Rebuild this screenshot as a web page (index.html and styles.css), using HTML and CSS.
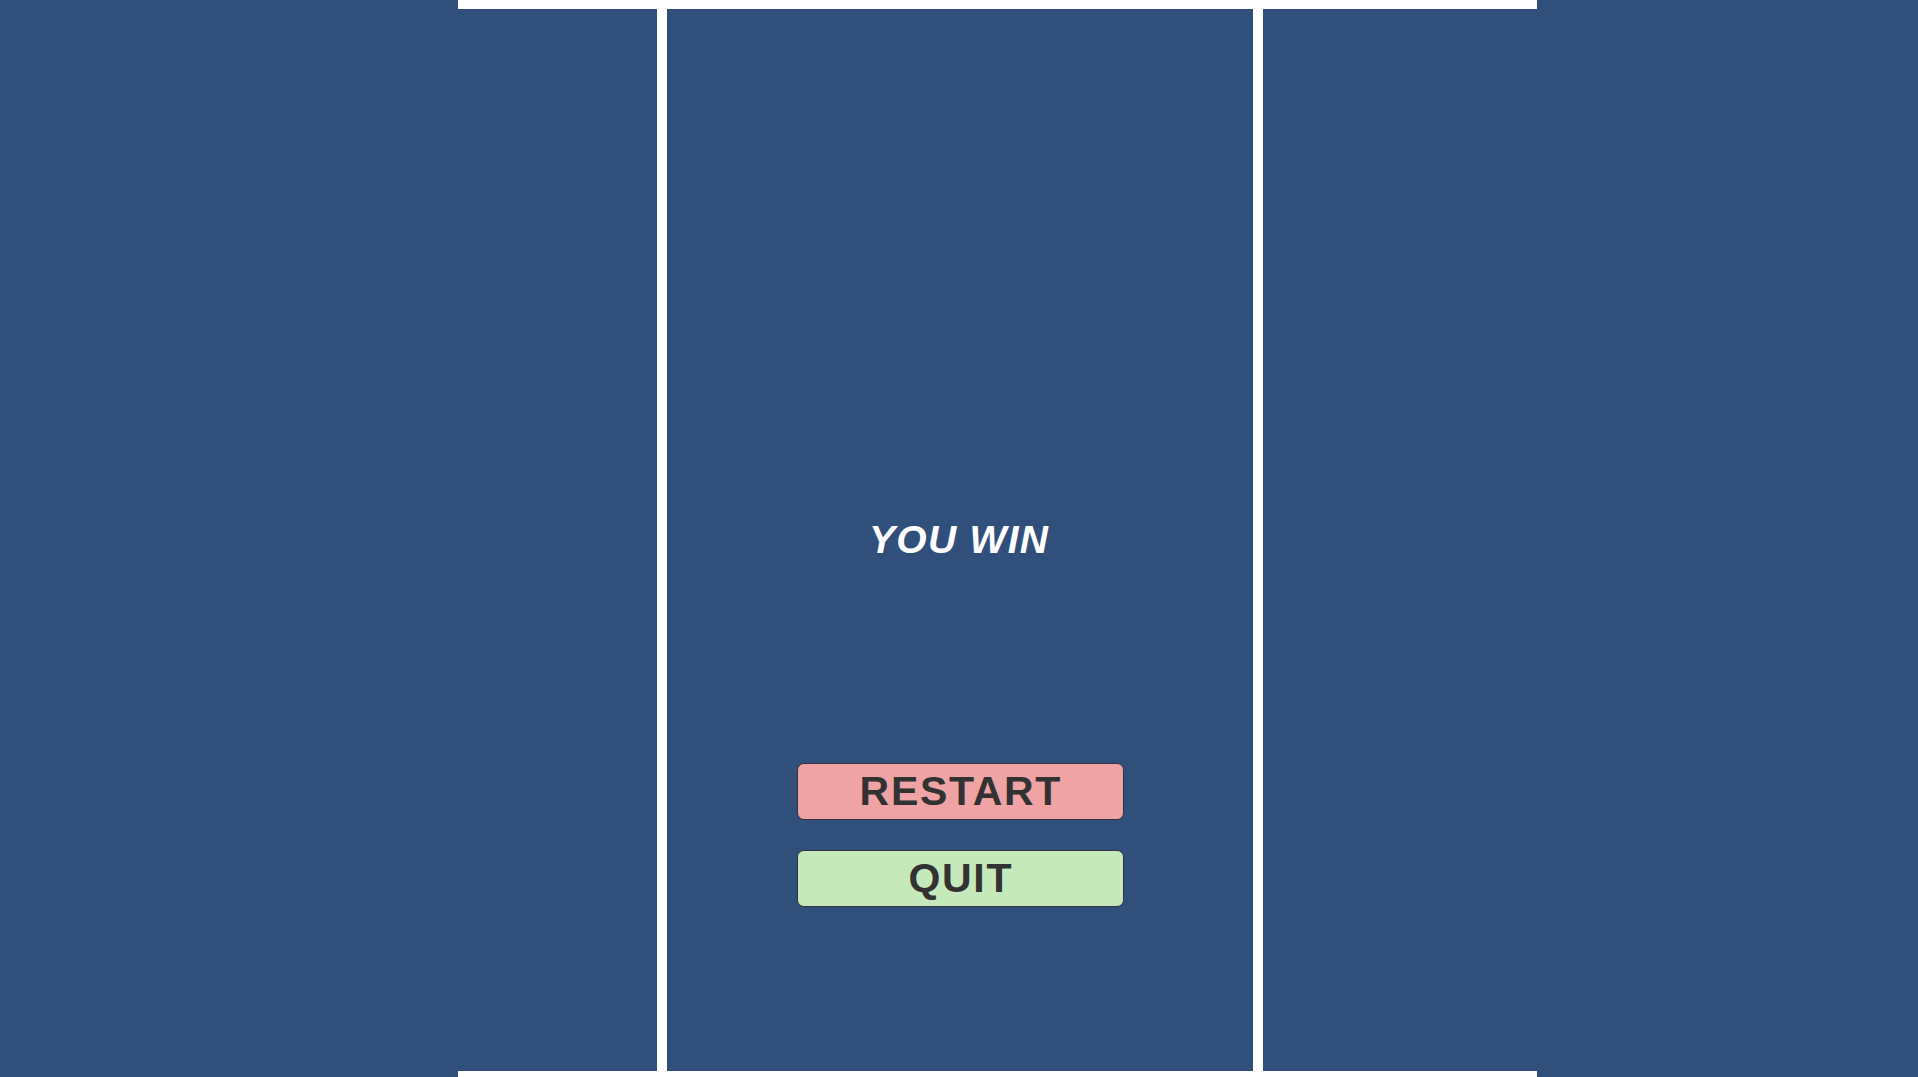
FILE: index.html
```html
<!DOCTYPE html>
<html>
<head>
<meta charset="utf-8">
<link rel="stylesheet" href="styles.css">
</head>
<body>
<div class="frame">
  <div class="side side-left"></div>
  <div class="divider"></div>
  <main class="stage">
    <div class="result">YOU WIN</div>
    <div class="actions">
      <button class="btn btn-restart">RESTART</button>
      <button class="btn btn-quit">QUIT</button>
    </div>
  </main>
  <div class="divider"></div>
  <div class="side side-right"></div>
</div>
</body>
</html>
```
FILE: styles.css
```css
html, body {
  margin: 0;
  padding: 0;
  height: 1077px;
  overflow: hidden;
  background: #314f7b;
  font-family: "Liberation Sans", Arial, sans-serif;
}
.frame {
  box-sizing: border-box;
  margin-left: 458px;
  width: 1079px;
  height: 1077px;
  border-top: 9px solid #ffffff;
  border-bottom: 6px solid #ffffff;
  display: grid;
  grid-template-columns: 199px 10px 586px 10px 274px;
}
.side {
  background: #314f7b;
}
.divider {
  background: #ffffff;
}
.stage {
  background: #314f7b;
  display: flex;
  flex-direction: column;
  align-items: center;
  padding-top: 508px;
}
.result {
  color: #ffffff;
  font-size: 39px;
  line-height: 46px;
  font-weight: bold;
  font-style: italic;
  height: 46px;
  letter-spacing: 1.3px;
  padding-left: 1.3px;
  margin-right: 3px;
}
.actions {
  margin-top: 200px;
  display: flex;
  flex-direction: column;
  gap: 30px;
}
.btn {
  box-sizing: border-box;
  width: 327px;
  height: 57px;
  border: 1.5px solid #35323f;
  border-radius: 7px;
  font-family: "Liberation Sans", Arial, sans-serif;
  font-weight: bold;
  font-size: 41px;
  letter-spacing: 1.7px;
  color: #323232;
  padding: 0 0 0 1.7px;
  display: flex;
  align-items: center;
  justify-content: center;
  line-height: 1;
}
.btn-restart {
  background: #f0a3a4;
}
.btn-quit {
  background: #c6e9bc;
}
```
